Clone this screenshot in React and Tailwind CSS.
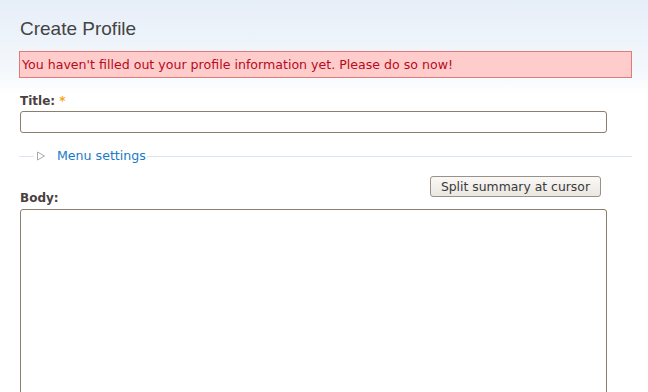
import React from "react";

const dejavu = { fontFamily: '"DejaVu Sans", Verdana, sans-serif' };

export default function App() {
  return (
    <div className="w-[648px] h-[392px] overflow-hidden bg-gradient-to-b from-[#e6eef8] via-[#f4f8fc] via-[18%] to-white to-[24%]">
      <div className="pl-[19px] pr-[16px]">
        {/* Heading */}
        <h1 className="pt-[16px] text-[19px] leading-[26px] text-[#444] font-['Liberation_Sans',Arial,sans-serif] pl-[1px]">
          Create Profile
        </h1>

        {/* Error message */}
        <div
          className="mt-[9px] h-[27px] border border-[#e27a7a] bg-[#ffcccc] text-[#b80a1a] text-[12.6px] leading-[25px] pl-[2px]"
          style={dejavu}
        >
          You haven't filled out your profile information yet. Please do so now!
        </div>

        {/* Title */}
        <div className="mt-[15px] pl-[1px]" style={dejavu}>
          <label className="block text-[12px] font-bold text-[#4a4040] leading-[16px]">
            Title: <span className="text-[#f5a623]">*</span>
          </label>
          <input
            type="text"
            className="mt-[2px] block w-[587px] h-[22px] border border-[#8c7e6c] rounded-[3px] bg-white outline-none"
          />
        </div>

        {/* Menu settings fieldset */}
        <div className="mt-[16px] flex items-center h-[14px]" style={dejavu}>
          <div className="w-[15px] h-px bg-[#dde6ef]" />
          <svg width="10" height="10" viewBox="0 0 10 10" className="mx-[2px]">
            <path d="M1.5 1 L8.5 5 L1.5 9 Z" fill="none" stroke="#aaaaaa" strokeWidth="1" />
          </svg>
          <span className="pl-[9px] pr-[1px] text-[12.6px] text-[#1a7ac8]">Menu settings</span>
          <div className="flex-1 h-px bg-[#dde6ef]" />
        </div>

        {/* Body label + button */}
        <div className="mt-[13px] flex items-end justify-between w-[582px] pl-[1px]" style={dejavu}>
          <label className="text-[12px] font-bold text-[#4a4040] leading-[16px]">Body:</label>
          <button className="mb-[9px] h-[21px] px-[10px] border border-[#9a9188] rounded-[3px] bg-gradient-to-b from-[#faf9f7] to-[#ebe7e1] text-[12.4px] text-[#3a3a3a] leading-[18px]">
            Split summary at cursor
          </button>
        </div>

        {/* Body textarea */}
        <textarea className="mt-[3px] ml-[1px] block w-[587px] h-[200px] border border-[#8c7e6c] rounded-[3px] bg-white outline-none resize-none" />
      </div>
    </div>
  );
}
